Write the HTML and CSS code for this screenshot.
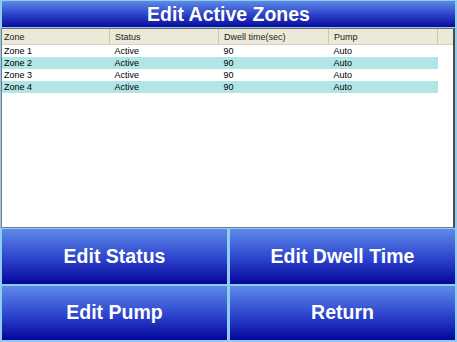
FILE: index.html
```html
<!DOCTYPE html>
<html lang="en">
<head>
    <meta charset="UTF-8">
    <title>Edit Active Zones</title>
    <link rel="stylesheet" href="styles.css">
</head>
<body>
    <div class="screen">
        <h1 class="title">Edit Active Zones</h1>

        <div class="grid-box">
            <table class="zones">
                <thead>
                    <tr>
                        <th class="c-zone">Zone</th>
                        <th class="c-status">Status</th>
                        <th class="c-dwell">Dwell time(sec)</th>
                        <th class="c-pump">Pump</th>
                        <th class="c-fill"></th>
                    </tr>
                </thead>
                <tbody>
                    <tr><td>Zone 1</td><td>Active</td><td>90</td><td>Auto</td><td class="c-fill"></td></tr>
                    <tr class="alt"><td>Zone 2</td><td>Active</td><td>90</td><td>Auto</td><td class="c-fill"></td></tr>
                    <tr><td>Zone 3</td><td>Active</td><td>90</td><td>Auto</td><td class="c-fill"></td></tr>
                    <tr class="alt"><td>Zone 4</td><td>Active</td><td>90</td><td>Auto</td><td class="c-fill"></td></tr>
                </tbody>
            </table>
        </div>

        <div class="buttons">
            <button type="button" class="btn">Edit Status</button>
            <button type="button" class="btn">Edit Dwell Time</button>
            <button type="button" class="btn">Edit Pump</button>
            <button type="button" class="btn">Return</button>
        </div>
    </div>
</body>
</html>
```

FILE: styles.css
```css
html, body {
    margin: 0;
    padding: 0;
}
body {
    background: #8ccdf0;
    font-family: "Liberation Sans", Arial, sans-serif;
}
.screen {
    width: 457px;
    height: 342px;
    display: flex;
    flex-direction: column;
}
.title {
    margin: 1px 2px 0 2px;
    height: 26px;
    line-height: 26px;
    font-size: 19.5px;
    font-weight: bold;
    color: #fff;
    text-align: center;
    text-shadow: 0 0 1px #3040a0;
    background: linear-gradient(#5d8ae8, #2a3fc8 55%, #0a0c9a);
}
.grid-box {
    margin: 1px 2px 0 1px;
    height: 198px;
    background: #fff;
    border-top: 1px solid #6e6e6e;
    border-left: 1px solid #7a7a7a;
    border-right: 2px solid #4a4a4a;
    border-bottom: 1px solid #7a7a7a;
    overflow: hidden;
}
.zones {
    border-collapse: collapse;
    table-layout: fixed;
    width: 451px;
    font-size: 9px;
    color: #000;
}
.zones th {
    background: #ece9d8;
    font-weight: normal;
    text-align: left;
    height: 14px;
    padding: 1px 0 0 5px;
    border-right: 1px solid #c9c6b4;
    border-bottom: 1px solid #d6d3c0;
    color: #222;
}
.zones td {
    height: 12px;
    padding: 0 0 0 5px;
    white-space: nowrap;
}
.zones th:first-child,
.zones td:first-child {
    padding-left: 2px;
}
.c-zone { width: 105px; }
.c-status { width: 103px; }
.c-dwell { width: 104px; }
.c-pump { width: 103px; }
.zones th.c-fill { border-right: none; }
.zones tr.alt td {
    background: #b2e6e6;
}
.zones tr.alt td.c-fill {
    background: #fff;
}
.buttons {
    flex: 1;
    display: grid;
    grid-template-columns: 1fr 1fr;
    grid-template-rows: 1fr 1fr;
    gap: 2px 3px;
    padding: 1px 2px 2px 2px;
}
.btn {
    border: none;
    margin: 0;
    padding: 0;
    color: #fff;
    font-family: "Liberation Sans", Arial, sans-serif;
    font-size: 19.5px;
    font-weight: bold;
    background: linear-gradient(#5d8ae8, #2c42cc 55%, #05069a);
    cursor: pointer;
}
```
